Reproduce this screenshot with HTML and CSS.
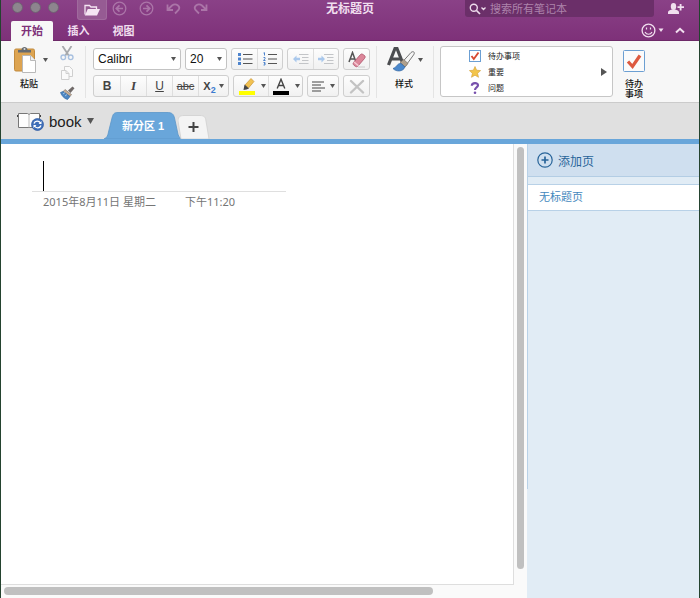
FILE: index.html
```html
<!DOCTYPE html>
<html lang="zh-CN">
<head>
<meta charset="utf-8">
<title>无标题页</title>
<link rel="stylesheet" href="styles.css">
</head>
<body>
<div class="window">
  <header class="header">
    <div class="titlebar">
      <div class="title-left">
        <div class="lights"><span class="light"></span><span class="light"></span><span class="light"></span></div>
        <button class="open-btn" aria-label="打开">
          <svg width="16" height="12" viewBox="0 0 16 12"><path d="M1 10.500V1.500h4.500l1.500 1.500h5.500V5" fill="none" stroke="#f5e6f3" stroke-width="1.300"/><path d="M3.800 5H16l-3 6.500H.800z" fill="#f5e6f3"/></svg>
        </button>
        <div class="history">
          <button class="bare" aria-label="后退"><svg width="15" height="15" viewBox="0 0 15 15" class="faint"><circle cx="7.500" cy="7.500" r="6.300"/><path d="M11 7.500H4.500M7.500 4.300L4.300 7.500l3.200 3.200" stroke-width="1.700"/></svg></button>
          <button class="bare" aria-label="前进"><svg width="15" height="15" viewBox="0 0 15 15" class="faint"><circle cx="7.500" cy="7.500" r="6.300"/><path d="M4 7.500h6.500M7.500 4.300l3.200 3.200-3.200 3.200" stroke-width="1.700"/></svg></button>
          <button class="bare" aria-label="撤消"><svg width="15" height="15" viewBox="0 0 15 15" class="faint"><path d="M1.500 3.500v5.500h5.500M2 8.500l4-4c4-3 9 1 6.500 4.500L9 12.500" stroke-width="1.800"/></svg></button>
          <button class="bare" aria-label="恢复"><svg width="15" height="15" viewBox="0 0 15 15" class="faint"><path d="M13.500 3.500v5.500h-5.500M13 8.500l-4-4C5 1.500 0 5.500 2.500 9L6 12.500" stroke-width="1.800"/></svg></button>
        </div>
      </div>
      <h1 class="title">无标题页</h1>
      <div class="title-right">
        <label class="search">
          <svg width="18" height="12" viewBox="0 0 18 12" fill="none" stroke="#eedcec"><circle cx="4.800" cy="4.800" r="3.500" stroke-width="1.400"/><path d="M7.500 7.500L11 11" stroke-width="1.700"/><path d="M12.500 4.500l2 2 2-2" stroke-width="1.300"/></svg>
          <input type="search" placeholder="搜索所有笔记本" aria-label="搜索所有笔记本">
        </label>
        <button class="bare" aria-label="共享"><svg width="16" height="12" viewBox="0 0 16 12" fill="#f1dfef"><ellipse cx="5.500" cy="3.500" rx="2.700" ry="3.400"/><path d="M0 11V9.300c0-1.500 2-2.300 3.800-2.800h3.400c1.800.500 3.800 1.300 3.800 2.800V11z"/><path d="M11.700 1h1.800v2.300H16V5h-2.500v2.400h-1.800V5H9.500V3.300h2.200z"/></svg></button>
      </div>
    </div>
    <div class="tabrow">
      <nav class="tabs">
        <button class="tab active">开始</button>
        <button class="tab">插入</button>
        <button class="tab">视图</button>
      </nav>
      <div class="tab-tools">
        <button class="bare" aria-label="反馈"><svg width="24" height="15" viewBox="0 0 24 15" fill="none" stroke="#f1dfef"><circle cx="7.500" cy="7.500" r="6.400" stroke-width="1.300"/><path d="M5.500 4.500v2M9.500 4.500v2M4 9c1.500 3 5.500 3 7 0" stroke-width="1.200"/><path d="M17.500 5.500h5l-2.500 3.500z" fill="#f1dfef" stroke="none"/></svg></button>
        <button class="bare" aria-label="折叠功能区"><svg width="10" height="7" viewBox="0 0 10 7" fill="none" stroke="#f1dfef" stroke-width="2"><path d="M1 5.500l4-3.700 4 3.700"/></svg></button>
      </div>
    </div>
  </header>

  <section class="ribbon" aria-label="开始">
    <div class="group clipboard">
      <button class="bare paste">
        <span class="with-caret">
          <svg width="23" height="27" viewBox="0 0 23 27"><rect x=".500" y="3" width="20" height="22" rx="1.500" fill="#dda451" stroke="#c28b3e"/><path d="M4 6.500V4h3.500c0-4 6-4 6 0H17v2.500z" fill="#666b70"/><circle cx="10.500" cy="3" r="1" fill="#ddd"/><path d="M8.500 9.500h8l5 5v12h-13z" fill="#fff" stroke="#b9b9b9"/><path d="M16.500 9.500v5h5" fill="#f0f0f0" stroke="#b9b9b9"/></svg>
          <svg class="caret" width="5" height="4" viewBox="0 0 5 4"><path d="M0 0h5L2.500 4z"/></svg>
        </span>
        <span class="cap">粘贴</span>
      </button>
      <div class="clip-tools">
        <button class="bare" aria-label="剪切"><svg width="14" height="15" viewBox="0 0 14 15" fill="none"><path d="M2.500 0l6.500 10M11.500 0L5 10" stroke="#a7a9ac" stroke-width="1.800"/><circle cx="3.300" cy="11.300" r="2.300" stroke="#a9c1e0" stroke-width="1.400"/><circle cx="10.700" cy="11.300" r="2.300" stroke="#a9c1e0" stroke-width="1.400"/></svg></button>
        <button class="bare" aria-label="复制"><svg width="14" height="15" viewBox="0 0 14 15" fill="#fafafa" stroke="#cfcfcf"><path d="M4.500.500h5l3 3v7h-8z"/><path d="M1.500 4.500h4.500l3 3v6H1.500zM6 4.500v3h3"/></svg></button>
        <button class="bare" aria-label="格式刷"><svg width="15" height="14" viewBox="0 0 15 14"><path d="M8 4.500L12.500.500l2 1.700L10.500 7z" fill="#706a69"/><path d="M5 3.500l6.500 5-1.500 2-6.800-5z" fill="#c6ad95" stroke="#746b65" stroke-width=".600"/><path d="M3 5.500L.500 6.500c1 3 3.500 6 7 7l2.500-3z" fill="#4d86c2" stroke="#356ba5" stroke-width=".700"/><path d="M3 8l2-1.500M5 10l2-1.500" stroke="#b3d1ee" stroke-width=".800"/></svg></button>
      </div>
    </div>

    <div class="group font">
      <div class="row">
        <span class="combo family"><select aria-label="字体"><option>Calibri</option></select><svg class="caret" width="5" height="4" viewBox="0 0 5 4"><path d="M0 0h5L2.500 4z"/></svg></span>
        <span class="combo size"><select aria-label="字号"><option>20</option></select><svg class="caret" width="5" height="4" viewBox="0 0 5 4"><path d="M0 0h5L2.500 4z"/></svg></span>
        <div class="seg">
          <button aria-label="项目符号"><svg width="16" height="14" viewBox="0 0 16 14"><path d="M1 1h3v3H1zM1 5.500h3v3H1zM1 10h3v3H1z" fill="#4c83cd"/><path d="M6 2.500h9.500M6 7h9.500M6 11.500h9.500" stroke="#555" stroke-width="1.200"/></svg></button>
          <button aria-label="编号"><svg width="16" height="14" viewBox="0 0 16 14"><path d="M2.500.500v3M1.500 1h1M1.500 5.500h1.500v1.200L1.500 8.500h2M1.500 10.500H3V13H1.500M2 11.700h1" stroke="#4c83cd" fill="none"/><path d="M6 2.500h9M6 7h9M6 11.500h9" stroke="#555" stroke-width="1.200"/></svg></button>
        </div>
        <div class="seg">
          <button aria-label="减少缩进"><svg width="16" height="12" viewBox="0 0 16 12"><path d="M0 6l3.500-3.500v2.200H7v2.600H3.500v2.200z" fill="#a9c8ec"/><path d="M6 1.500h9.500M9 4.500h6.500M9 7.500h6.500M6 10.500h9.500" stroke="#c3c5c8"/></svg></button>
          <button aria-label="增加缩进"><svg width="16" height="12" viewBox="0 0 16 12"><path d="M7 6L3.500 2.500v2.200H0v2.600h3.500v2.200z" fill="#a9c8ec"/><path d="M6 1.500h9.500M9 4.500h6.500M9 7.500h6.500M6 10.500h9.500" stroke="#c3c5c8"/></svg></button>
        </div>
        <div class="seg">
          <button aria-label="清除格式"><svg width="18" height="17" viewBox="0 0 18 17"><path d="M1 11L4.500 1.500 8 11M2.300 8h4" fill="none" stroke="#555" stroke-width="1.500"/><path d="M5.500 11.500l7-8c1-1 2-.500 4 1 1 1 .800 2 0 3l-6.500 7.500c-1 1-2 1-3 0-1.800-1-2.300-2.300-1.500-3.500z" fill="#dc879a" stroke="#ad5269" stroke-width=".800"/><path d="M6 11l4.500 3.800" stroke="#f7cbd4" stroke-width="1.500"/><path d="M10 16h7" stroke="#ccc"/></svg></button>
        </div>
      </div>
      <div class="row">
        <div class="seg letters">
          <button class="b" aria-label="加粗">B</button>
          <button class="i" aria-label="倾斜">I</button>
          <button class="u" aria-label="下划线">U</button>
          <button class="s" aria-label="删除线">abc</button>
          <button class="sub" aria-label="下标"><span>X<sub>2</sub></span><svg class="caret" width="5" height="4" viewBox="0 0 5 4"><path d="M0 0h5L2.500 4z"/></svg></button>
        </div>
        <div class="seg color">
          <button aria-label="突出显示"><svg width="16" height="17" viewBox="0 0 16 17"><path d="M0 13h16v4H0z" fill="#ffff00"/><path d="M6 7l6-6.500L15 3.500 9.500 10z" fill="#f1c151" stroke="#c99334" stroke-width=".700"/><path d="M5.500 6.500l4.500 4-2.500 1-3 .500z" fill="#444"/></svg></button>
          <button class="drop" aria-label="突出显示颜色"><svg class="caret" width="5" height="4" viewBox="0 0 5 4"><path d="M0 0h5L2.500 4z"/></svg></button>
          <button aria-label="字体颜色"><svg width="16" height="17" viewBox="0 0 16 17"><path d="M0 13h16v4H0z" fill="#000"/><path d="M4.200 10.500L8 1.300l3.800 9.200M5.500 7.500h5" fill="none" stroke="#444" stroke-width="1.400"/></svg></button>
          <button class="drop" aria-label="选择字体颜色"><svg class="caret" width="5" height="4" viewBox="0 0 5 4"><path d="M0 0h5L2.500 4z"/></svg></button>
        </div>
        <div class="seg align">
          <button aria-label="对齐"><svg width="14" height="11" viewBox="0 0 14 11" stroke="#444" stroke-width="1.100"><path d="M0 1h12M0 4h9M0 7h13M0 10h9"/></svg><svg class="caret" width="5" height="4" viewBox="0 0 5 4"><path d="M0 0h5L2.500 4z"/></svg></button>
        </div>
        <div class="seg">
          <button aria-label="删除"><svg width="16" height="15" viewBox="0 0 16 15" stroke="#c3c3c3" stroke-width="2.400" stroke-linecap="round"><path d="M2 2l12 11.500M14 2L2 13.500"/></svg></button>
        </div>
      </div>
    </div>

    <div class="group styles">
      <button class="bare style-btn">
        <span class="with-caret">
          <svg width="29" height="27" viewBox="0 0 29 27"><path d="M1.500 19L8 2.500h2L16.500 19M4.500 13h9" fill="none" stroke="#4b4d50" stroke-width="3.200"/><path d="M14.500 17L24 6.500c2.500-2 4.500 0 2.500 2.500L18.500 20z" fill="#f5f5f5" stroke="#777"/><path d="M13 16.500l5 4.500 3-3.500-4.300-4z" fill="#b0a08c" stroke="#796f65" stroke-width=".700"/><path d="M14 17.500c-4-.500-4 4-8 5 3 3.500 10 3.500 12-1.500z" fill="#4b88cc" stroke="#3064a2" stroke-width=".700"/></svg>
          <svg class="caret" width="5" height="4" viewBox="0 0 5 4"><path d="M0 0h5L2.500 4z"/></svg>
        </span>
        <span class="cap">样式</span>
      </button>
    </div>

    <div class="group tags">
      <div class="gallery">
        <div class="tag-list">
          <button class="bare tag"><svg width="12" height="12" viewBox="0 0 12 12"><rect x=".500" y=".500" width="11" height="11" fill="#fff" stroke="#6b9fd3"/><path d="M2.500 6l2.300 3L9.500 2.500" fill="none" stroke="#d84a32" stroke-width="1.900"/></svg>待办事项</button>
          <button class="bare tag"><svg width="12" height="12" viewBox="0 0 12 12"><path d="M6 .500l1.600 3.700 4 .400-3 2.700.9 4L6 9.200l-3.500 2.100.9-4-3-2.700 4-.4z" fill="#f3c54b" stroke="#d29d33" stroke-width=".600"/></svg>重要</button>
          <button class="bare tag"><svg width="12" height="12" viewBox="0 0 12 12"><path d="M2.800 3.700C3 .300 9 .300 9 3.300c0 2.200-3 2-3 4.700" fill="none" stroke="#7750ac" stroke-width="2.200"/><circle cx="6" cy="10.700" r="1.300" fill="#7750ac"/></svg>问题</button>
        </div>
        <button class="bare more" aria-label="更多标记"><svg width="6" height="8" viewBox="0 0 6 8"><path d="M0 0l6 4-6 4z" fill="#555"/></svg></button>
      </div>
      <button class="bare todo">
        <svg width="22" height="22" viewBox="0 0 22 22"><rect x=".500" y=".500" width="21" height="21" rx="1" fill="#fbfbfb" stroke="#6c9fd2"/><path d="M5 11.500l4.500 5L17 5.500" fill="none" stroke="#dd5a40" stroke-width="3.200"/></svg>
        <span class="cap">待办<br>事项</span>
      </button>
    </div>
  </section>

  <div class="notebar">
    <button class="bare notebook">
      <svg width="27" height="20" viewBox="0 0 27 20"><path d="M1.500 2.500h9l1.500 1 1.500-1h9v14h-21z" fill="#fdfdfd" stroke="#777"/><path d="M12 3.500v13" stroke="#bbb"/><path d="M.500 4v2M23.500 4v2" stroke="#444"/><circle cx="20.500" cy="13.500" r="6" fill="#3e6fb9" stroke="#2d58a0" stroke-width=".700"/><path d="M17 12.500c1-3 5-3 6.500-.500M24 14.500c-1 3-5 3-6.500.500" fill="none" stroke="#fff" stroke-width="1.300"/><path d="M24.500 10v3h-3zM16.500 17v-3h3z" fill="#fff"/></svg>
      <span>book</span>
      <svg class="caret" width="7" height="6" viewBox="0 0 7 6"><path d="M0 0h7L3.500 6z"/></svg>
    </button>
    <button class="bare section-tab">
      <svg width="78" height="28" viewBox="0 0 78 28"><path d="M0 28c3-1 4-4 4.500-7L8 7C9 3 10 1.500 14 1.500h49c5 0 6.500 1.500 7.500 5.500l3 14c.500 3 1.500 6 4.500 7z" fill="#69a6da" stroke="#5b96c9" stroke-width=".800"/></svg>
      <span>新分区 1</span>
    </button>
    <button class="bare add-section" aria-label="新建分区">
      <svg width="32" height="24" viewBox="0 0 32 24"><path d="M3 24L0 6C0 2 2 .500 6 .500h16c4 0 5.500 1.500 6 5.500l3 18z" fill="#f4f4f4" stroke="#cfcfcf" stroke-width=".800"/><path d="M10.500 12h10M15.500 7v10" stroke="#444" stroke-width="2"/></svg>
    </button>
  </div>

  <main class="workspace">
    <div class="canvas">
      <article class="page">
        <div class="page-title"><span class="cursor"></span><input type="text" aria-label="页面标题"></div>
        <p class="stamp"><time>2015年8月11日 星期二</time><time>下午11:20</time></p>
      </article>
      <div class="vscroll"><div class="vthumb"></div></div>
      <div class="hscroll"><div class="hthumb"></div></div>
    </div>
    <aside class="sidebar">
      <button class="bare add-page"><svg width="16" height="16" viewBox="0 0 16 16" fill="none" stroke="#286499"><circle cx="8" cy="8" r="7.200" stroke-width="1.200"/><path d="M4.500 8h7M8 4.500v7" stroke-width="1.700"/></svg>添加页</button>
      <a class="page-link" href="#page">无标题页</a>
    </aside>
  </main>
</div>
</body>
</html>
```
FILE: styles.css
```css
* { box-sizing: border-box; }

body {
  margin: 0;
  background: #fff;
  color: #222;
  font: 12px "Liberation Sans", "Noto Sans CJK SC", sans-serif;
}

svg { display: block; flex: none; }

button, input, select { font: inherit; color: inherit; margin: 0; }

.bare { border: 0; padding: 0; background: none; }

.caret { fill: #555; }

.window {
  display: flex;
  flex-direction: column;
  min-height: 100vh;
  border: solid #24432f;
  border-width: 0 1px;
}

/* Title bar and ribbon tabs */
.header {
  background: linear-gradient(#8a4187, #7e3179);
  border-bottom: 1px solid #6d2968;
  color: #f1dfef;
}

.titlebar {
  display: grid;
  grid-template-columns: 1fr auto 1fr;
  height: 20px;
}

.title-left, .title-right, .history, .lights { display: flex; }

.lights { gap: 7px; padding: 2px 18px 0 11px; }

.light {
  width: 11px;
  height: 11px;
  border-radius: 50%;
  background: #8d858e;
  border: 1px solid #716074;
}

.open-btn {
  display: grid;
  place-items: center;
  width: 30px;
  height: 20px;
  padding: 0;
  border: 1px solid #a06a9d;
  border-top: 0;
  border-radius: 0 0 3px 3px;
  background: #965b93;
}

.history { gap: 12px; padding: 0 0 0 5px; height: 16px; }

.faint { fill: none; stroke: #ab75a8; stroke-width: 1.3px; }

.title {
  margin: 0;
  font-size: 12px;
  line-height: 19px;
  font-weight: 700;
}

.title-right { justify-content: flex-end; gap: 14px; height: 17px; padding-right: 15px; }

.search {
  display: flex;
  align-items: center;
  gap: 3px;
  flex: 0 1 189px;
  min-width: 0;
  padding-left: 4px;
  background: #6b2f69;
  border-radius: 0 0 3px 3px;
}

.search input {
  flex: 1;
  min-width: 0;
  height: 17px;
  padding: 0;
  border: 0;
  outline: 0;
  background: none;
  font-size: 11px;
}

.search input::placeholder { color: #ad83ab; opacity: 1; }

.tabrow { display: flex; justify-content: space-between; height: 20px; }

.tabs { display: flex; padding: 1px 0 0 10px; }

.tab {
  width: 45px;
  height: 20px;
  padding: 0;
  border: 0;
  background: none;
  font-size: 11px;
  line-height: 20px;
  font-weight: 700;
}

.tab.active { width: 42px; margin-right: 3px; background: #f7f7f7; color: #7e3179; border-radius: 2px 2px 0 0; }

.tab-tools { display: flex; align-items: center; gap: 10px; padding-right: 14px; }

/* Ribbon */
.ribbon {
  display: flex;
  height: 62px;
  padding: 5px 0 4px;
  background: #f7f7f7;
  border-bottom: 1px solid #cbcbcb;
}

.group { display: flex; border-right: 1px solid #e4e4e4; }

.clipboard { width: 85px; gap: 12px; padding-left: 13px; }

.paste, .style-btn, .todo { display: flex; flex-direction: column; }

.paste, .style-btn { align-items: flex-start; }

.with-caret { display: flex; align-items: center; gap: 6px; }

.cap { font-size: 9px; line-height: 10px; font-weight: 500; color: #111; }

.paste .cap { padding-left: 6px; margin-top: 6px; }

.clip-tools { display: flex; flex-direction: column; gap: 5px; }

.font { flex-direction: column; gap: 5px; padding: 2px 6px 0 7px; }

.row { display: flex; gap: 4px; }

.combo {
  display: grid;
  align-items: center;
  height: 22px;
  border: 1px solid #c3c3c3;
  border-radius: 3px;
  background: #fff;
}

.family { width: 88px; }
.size { width: 42px; }

.combo select, .combo .caret { grid-area: 1 / 1; }

.combo .caret { justify-self: end; margin-right: 4px; pointer-events: none; }

.combo select {
  appearance: none;
  width: 100%;
  height: 20px;
  padding: 0 4px;
  border: 0;
  background: none;
  color: #111;
  font-size: 12px;
}

.seg {
  display: flex;
  height: 22px;
  border: 1px solid #cfcfcf;
  border-radius: 3px;
  background: linear-gradient(#fdfdfd, #f1f1f1);
}

.seg button {
  display: flex;
  align-items: center;
  justify-content: center;
  width: 25px;
  padding: 0;
  border: 0;
  background: none;
}

.seg button + button { border-left: 1px solid #dedede; }

.letters button { width: 26px; color: #444; font-size: 12px; }
.letters .b { font-weight: 700; }
.letters .i { font-family: "Liberation Serif", serif; font-style: italic; font-weight: 700; font-size: 13px; }
.letters .u { text-decoration: underline; }
.letters .s { text-decoration: line-through; font-size: 11px; }
.letters .sub { width: 30px; gap: 3px; font-weight: 700; font-size: 11px; }
.letters sub { color: #3c7bd0; font-size: 9px; line-height: 0; }

.color button { width: 25px; }
.seg.color .drop { width: 9px; border-left: 0; }

.align button { width: 30px; gap: 4px; }

.styles { width: 57px; padding-left: 10px; }
.styles .with-caret { gap: 2px; }
.styles .cap { padding-left: 8px; margin-top: 6px; }

.tags { flex: 1; gap: 10px; padding-left: 6px; border-right: 0; }

.gallery {
  display: flex;
  align-items: center;
  width: 173px;
  height: 51px;
  padding: 0 5px 0 28px;
  border: 1px solid #c6c6c6;
  border-radius: 3px;
  background: #fff;
}

.tag-list { display: flex; flex-direction: column; flex: 1; }

.tag { display: flex; align-items: center; gap: 7px; height: 16px; font-size: 8px; color: #222; }

.todo { align-items: center; gap: 7px; padding-top: 4px; }

/* Notebook bar */
.notebar {
  display: flex;
  align-items: flex-end;
  height: 41px;
  padding-left: 16px;
  background: #e0e0e0;
  border-bottom: 5px solid #69a6da;
}

.notebook {
  display: flex;
  align-items: center;
  gap: 5px;
  width: 87px;
  height: 36px;
  font-size: 15px;
  color: #1c1c1c;
}

.section-tab { display: grid; place-items: center; color: #fff; font-size: 11px; font-weight: 700; }
.section-tab svg, .section-tab span { grid-area: 1 / 1; }

.add-section { margin-left: -4px; }

/* Note canvas */
.workspace { display: flex; flex: 1; }

.canvas {
  display: grid;
  grid-template: 1fr 13px / 1fr 13px;
  flex: 1;
  background: #fafafa;
}

.page {
  padding: 17px 31px;
  background: #fff;
  border: solid #dedede;
  border-width: 0 1px 1px 0;
}

.page-title {
  display: flex;
  max-width: 254px;
  padding-left: 11px;
  border-bottom: 1px solid #dfdfdf;
}

.cursor { width: 1px; height: 30px; background: #000; }

.page-title input {
  flex: 1;
  min-width: 0;
  height: 30px;
  padding: 0;
  border: 0;
  outline: 0;
  font-size: 26px;
}

.stamp {
  display: flex;
  gap: 29px;
  margin: 0;
  padding-left: 11px;
  font-family: "Noto Sans", "Noto Sans CJK SC", sans-serif;
  font-size: 11px;
  line-height: 20px;
  color: #757575;
}

.vscroll { padding: 3px 3px 16px; }
.vthumb { height: 100%; border-radius: 4px; background: #c0c0c0; }

.hscroll { grid-column: 1 / -1; padding: 2px 0 3px 3px; }
.hthumb { width: 82%; height: 8px; border-radius: 4px; background: #c0c0c0; }

/* Page list */
.sidebar {
  flex: 0 0 172px;
  padding-left: 1px;
  background: linear-gradient(#b8d1e7, #b8d1e7) 0 0 / 1px 76% no-repeat #e1ecf5;
}

.add-page {
  display: flex;
  align-items: center;
  gap: 5px;
  width: 100%;
  height: 33px;
  padding-left: 9px;
  background: #cfdfef;
  border-bottom: 1px solid #b3cde4;
  color: #286499;
  font-size: 12px;
}

.page-link {
  display: block;
  margin-top: 7px;
  padding-left: 11px;
  border: solid #b8d1e7;
  border-width: 1px 0;
  background: #fff;
  color: #4388bd;
  font-size: 11px;
  line-height: 25px;
  text-decoration: none;
}
```
